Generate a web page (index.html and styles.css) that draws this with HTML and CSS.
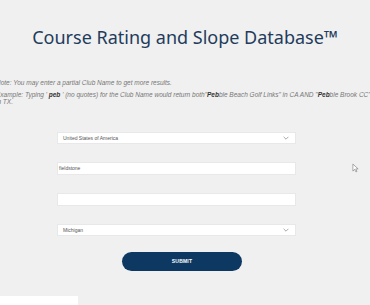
FILE: index.html
```html
<!DOCTYPE html>
<html>
<head>
<meta charset="utf-8">
<link rel="stylesheet" href="styles.css">
</head>
<body>
<div class="page">
  <h1 class="title">Course Rating and Slope Database™</h1>
  <div class="notes">
    <p class="note">Note: You may enter a partial Club Name to get more results.</p>
    <p class="note">Example: Typing ' <b>peb</b> ' (no quotes) for the Club Name would return both"<b>Peb</b>ble Beach Golf Links" in CA AND "<b>Peb</b>ble Brook CC" in TX.</p>
  </div>
  <form class="form">
    <div class="field select"><span>United States of America</span><svg class="chev" viewBox="0 0 10 6" width="6" height="4"><path d="M1 1l4 4 4-4" fill="none" stroke="#888" stroke-width="1.2"/></svg></div>
    <div class="field input"><span>fieldstone</span></div>
    <div class="field input"></div>
    <div class="field select"><span>Michigan</span><svg class="chev" viewBox="0 0 10 6" width="6" height="4"><path d="M1 1l4 4 4-4" fill="none" stroke="#888" stroke-width="1.2"/></svg></div>
    <div class="actions"><button type="button" class="submit">SUBMIT</button></div>
  </form>
  <div class="footer-box"></div>
</div>
<svg class="cursor" viewBox="0 0 8 11" width="7" height="10"><path d="M1 1v8l2-2 1.5 3 1.2-.6L4.3 6.5H7z" fill="#fff" stroke="#777" stroke-width="0.7"/></svg>
</body>
</html>
```
FILE: styles.css
```css
html, body {
  margin: 0;
  padding: 0;
  background: #f0f0f0;
  width: 370px;
  height: 305px;
  overflow: hidden;
  font-family: "Liberation Sans", Arial, sans-serif;
}
.page {
  display: flex;
  flex-direction: column;
  height: 305px;
}
.title {
  margin: 26px 0 0 0;
  text-align: center;
  font-family: "Noto Sans", sans-serif;
  font-weight: 400;
  font-size: 18px;
  line-height: 22px;
  color: #1f3c5c;
}
.notes {
  margin: 31px 0 0 -4px;
  color: #777;
  font-style: italic;
  font-size: 6.5px;
  line-height: 7.5px;
}
.note {
  margin: 0 0 4px 0;
  width: 380px;
}
.note b {
  color: #333;
  font-weight: 700;
}
.form {
  margin: 22px 0 0 57px;
  width: 239px;
  display: flex;
  flex-direction: column;
  gap: 18px;
}
.field {
  height: 12px;
  background: #fff;
  border: 1px solid #e8e8e8;
  box-sizing: border-box;
  display: flex;
  align-items: center;
  font-size: 5px;
  color: #555;
}
.select {
  padding: 0 6px 0 5px;
  justify-content: space-between;
}
.input {
  padding: 0 1px;
  height: 13px;
}
.chev {
  display: block;
}
.actions {
  display: flex;
  margin-top: -2px;
  padding-left: 65px;
}
.submit {
  width: 120px;
  height: 19px;
  border: none;
  border-radius: 10px;
  background: #0d3862;
  color: #fff;
  font-family: "Liberation Sans", Arial, sans-serif;
  font-size: 5px;
  font-weight: 700;
  letter-spacing: 0.2px;
  padding: 0;
}
.footer-box {
  margin-top: auto;
  width: 78px;
  height: 9px;
  background: #fff;
}
.cursor {
  position: absolute;
  left: 352px;
  top: 163px;
}
```
